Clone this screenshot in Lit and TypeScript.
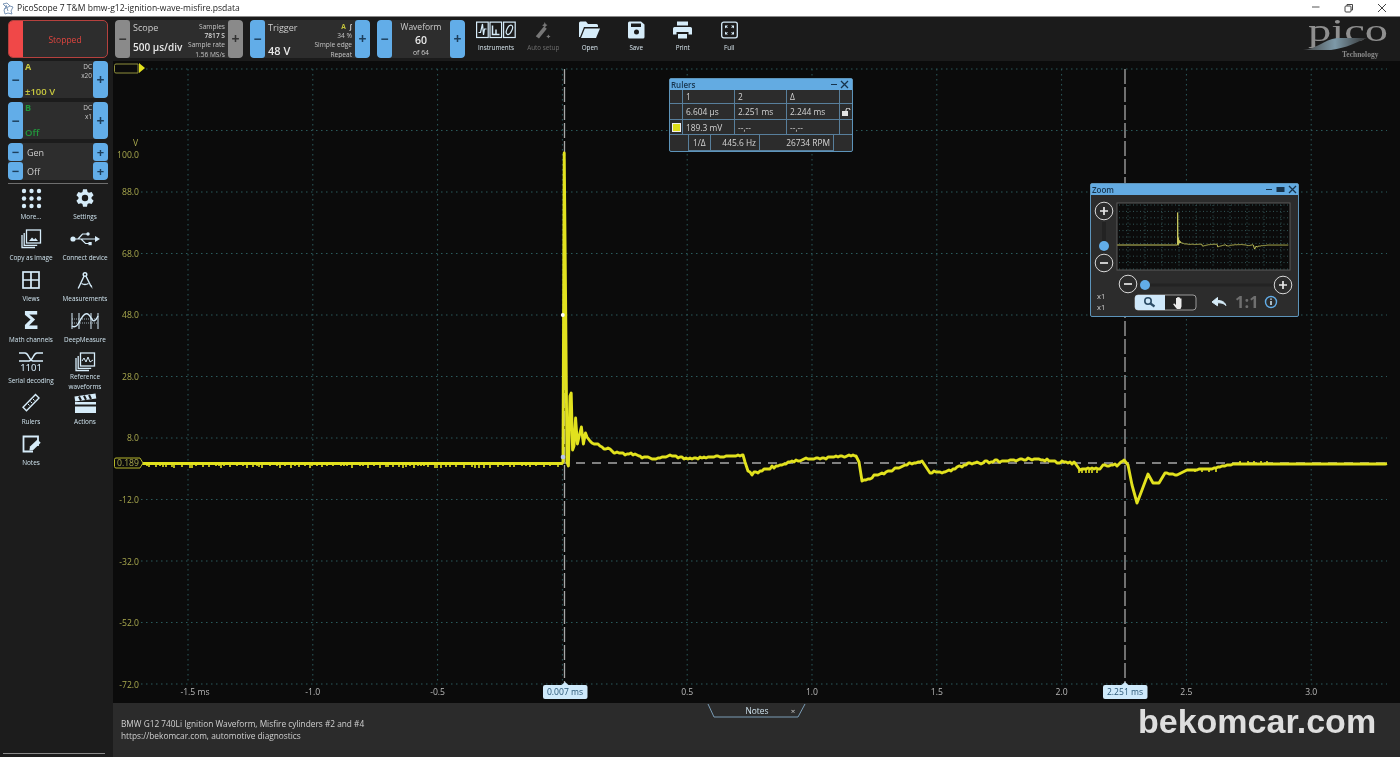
import { LitElement, html, css, svg } from "lit";
import { customElement } from "lit/decorators.js";

const Y = "#e2e21e";
const TICK = "#b9b9b9";
const OLIVE = "#a9a94e";

function rng(seed: number) {
  let s = seed;
  return () => {
    s = (s * 16807) % 2147483647;
    return s / 2147483647;
  };
}

function buildTrace(): { d: string; ticks: string } {
  const r = rng(4711);
  const pts: [number, number][] = [];
  pts.push([115, 463.5], [562, 463.5]);
  const raw: [number, number][] = [
    [563, 462], [564.2, 153], [565.6, 300], [567, 462], [568.4, 466], [570, 396], [571.2, 393], [572.6, 450], [574, 446],
    [575.6, 418], [577.4, 444], [579.2, 436], [581.4, 427], [583.4, 444], [585.5, 433], [587, 437],
  ];
  pts.push(...raw);
  const anchors: [number, number][] = [
    [590, 441], [600, 446], [610, 450], [615, 453], [635, 454], [640, 457], [660, 458], [666, 456], [672, 455], [678, 458],
    [700, 458], [730, 456], [743, 455], [745, 462], [748, 472], [752, 474], [760, 471], [770, 468], [780, 465], [790, 463],
    [800, 460], [820, 458], [845, 456], [856, 456], [859, 462], [862, 481], [870, 478], [880, 474], [895, 469], [910, 464], [922, 461],
    [930, 472], [945, 472], [960, 466], [975, 463], [1000, 461], [1035, 459], [1060, 462], [1075, 463], [1080, 469], [1100, 469], [1103, 465],
    [1117, 465], [1124, 460], [1128, 465], [1132, 485], [1137, 503], [1142, 490], [1148, 474], [1153, 483], [1159, 483], [1165, 473], [1177, 475],
    [1187, 470], [1210, 469], [1223, 466], [1235, 464], [1387, 463.5],
  ];
  for (let i = 0; i < anchors.length - 1; i++) {
    const [x0, y0] = anchors[i];
    const [x1, y1] = anchors[i + 1];
    const steep = Math.abs(y1 - y0) / (x1 - x0) > 1;
    if (steep) {
      pts.push([x0, y0]);
      continue;
    }
    for (let x = x0; x < x1; x += 2) {
      const t = (x - x0) / (x1 - x0);
      const jitter = x < 1120 ? (r() > 0.6 ? (r() > 0.5 ? 1 : -1) : 0) : 0;
      pts.push([x, Math.round(y0 + (y1 - y0) * t + jitter)]);
    }
  }
  pts.push([1387, 463.5]);
  const d = "M" + pts.map((p) => `${p[0]} ${p[1]}`).join("L");
  let ticks = "";
  for (let x = 118; x < 560; x += 2 + Math.floor(r() * 7)) {
    ticks += `M${x} 464V${466 + Math.floor(r() * 3)}`;
  }
  for (let x = 1079; x < 1100; x += 3 + Math.floor(r() * 4)) ticks += `M${x} 470V473`;
  for (let x = 1195; x < 1222; x += 4 + Math.floor(r() * 4)) ticks += `M${x} 469V472`;
  for (let x = 1240; x < 1270; x += 5 + Math.floor(r() * 4)) ticks += `M${x} 461V464`;
  return { d, ticks };
}
const TRACE = buildTrace();

const XS = [188, 312.8, 437.6, 562.4, 687.2, 812, 936.8, 1061.6, 1186.4, 1311.2];
const XL = ["-1.5 ms", "-1.0", "-0.5", "", "0.5", "1.0", "1.5", "2.0", "2.5", "3.0"];
const HY = [69, 130.5, 192, 253.5, 315, 376.5, 438, 499.5, 561, 622.5, 684];
const YL: [string, number][] = [
  ["100.0", 155], ["88.0", 192], ["68.0", 254], ["48.0", 315], ["28.0", 377], ["8.0", 438],
  ["-12.0", 500], ["-32.0", 562], ["-52.0", 623], ["-72.0", 685],
];

function gear(cx: number, cy: number, ro: number, ri: number, n: number) {
  let d = "";
  for (let i = 0; i < n; i++) {
    const a = (i / n) * Math.PI * 2 - Math.PI / 2;
    const w = Math.PI / n;
    const p = (rad: number, ang: number) => `${(cx + rad * Math.cos(ang)).toFixed(2)} ${(cy + rad * Math.sin(ang)).toFixed(2)}`;
    d += `${i ? "L" : "M"}${p(ri, a - w * 0.75)}L${p(ro, a - w * 0.42)}L${p(ro, a + w * 0.42)}L${p(ri, a + w * 0.75)}`;
  }
  return d + "Z";
}

const ICON = {
  more: svg`<g fill="currentColor">${[0, 1, 2].map((r) => [0, 1, 2].map((c) => svg`<circle cx=${3 + c * 7.5} cy=${3 + r * 7.5} r="2.2"></circle>`))}</g>`,
  settings: svg`<path fill="currentColor" fill-rule="evenodd" d="${gear(10, 10, 9, 6.6, 6)} M10 6.8a3.2 3.2 0 1 0 0 6.4a3.2 3.2 0 0 0 0-6.4Z"></path>`,
  copy: svg`<g fill="none" stroke="currentColor" stroke-width="1.3"><rect x="5.5" y="1" width="14" height="13"></rect><path d="M3.2 4v12.3h13M1 6v12.5h13"></path></g><path fill="currentColor" d="M8 12l3-3.5 2 2 1.5-1.5L17 12z"></path>`,
  usb: svg`<g fill="currentColor" stroke="currentColor"><circle cx="3" cy="9" r="2.6" stroke="none"></circle><path fill="none" stroke-width="1.2" d="M3 9H26M8 9l4.5-5H17M11 9l4.5 4.5H19"></path><path stroke="none" d="M25 6l5 3-5 3z"></path><circle cx="18" cy="4" r="1.7" stroke="none"></circle><rect x="18.5" y="12" width="3.2" height="3.2" stroke="none"></rect></g>`,
  views: svg`<g fill="none" stroke="currentColor" stroke-width="1.7"><rect x="2" y="2" width="16" height="16"></rect><path d="M10 2v16M2 10h16"></path></g>`,
  meas: svg`<g fill="none" stroke="currentColor" stroke-width="1.4"><circle cx="10" cy="4.5" r="1.8"></circle><path d="M9 6.2L3.2 18.5M11 6.2l5 10"></path><path d="M6.5 13.5c2.2 1.3 4.7 1.3 7 0"></path></g><path fill="currentColor" d="M15.5 16l2 3-.6-3.8z"></path>`,
  deep: svg`<g fill="none" stroke="currentColor"><path stroke-width="1.2" d="M1 2v16M8 2v16M20 2v16M27 2v16" opacity=".85"></path><path stroke-width=".7" d="M1 8H27M1 12H27" stroke-dasharray="1 1"></path><path stroke-width="1.4" d="M1 15C5 18 8 12 10 8S15 1 18 4S22 15 27 5"></path></g>`,
  serial: svg`<g fill="none" stroke="currentColor" stroke-width="1.5"><path d="M1 2H7C11 2 11 10 15 10H25M25 2H19C15 2 15 10 11 10H1"></path></g><text x="13" y="20" text-anchor="middle" fill="currentColor" font-size="9.500" font-family="Noto Sans, sans-serif">1101</text>`,
  ref: svg`<g fill="none" stroke="currentColor" stroke-width="1.3"><rect x="5.5" y="1" width="14" height="13"></rect><path d="M3.2 4v12.3h13M1 6v12.5h13"></path><path d="M7 9l2-3 2 4 2-5 2 5 3-2" stroke-width="1"></path></g>`,
  rulers: svg`<g fill="none" stroke="currentColor" stroke-width="1.4"><path d="M14.5 1.5L18 5 5.5 17.8 2 14.2z"></path><path stroke-width="1" d="M12 6l1.5 1.5M9.5 8.6L11 10M7 11l1.5 1.5"></path></g>`,
  actions: svg`<g fill="currentColor"><path d="M1 9h21v11H1z"></path><path d="M0.5 3.6L21.5 0.6 22.3 5.5 1.2 8.4z"></path></g><path stroke="#1c1c1c" stroke-width="2" d="M5 3.5l2 4M10 2.8l2 4M15 2l2 4M1 12.5H22"></path>`,
  notes: svg`<g fill="none" stroke="currentColor" stroke-width="1.8"><path d="M12 17.5H2.5V2.5H17V12"></path></g><path fill="currentColor" d="M9 12.6l7.5-7 3.2 3.2-7.5 7.2-3.8.6z"></path>`,
};

type Item = { key: keyof typeof ICON | "sigma"; w: number; h: number; label: string[]; };
const ITEMS: Item[] = [
  { key: "more", w: 21, h: 21, label: ["More..."] },
  { key: "settings", w: 20, h: 20, label: ["Settings"] },
  { key: "copy", w: 21, h: 20, label: ["Copy as image"] },
  { key: "usb", w: 30, h: 18, label: ["Connect device"] },
  { key: "views", w: 20, h: 20, label: ["Views"] },
  { key: "meas", w: 20, h: 20, label: ["Measurements"] },
  { key: "sigma", w: 20, h: 20, label: ["Math channels"] },
  { key: "deep", w: 28, h: 20, label: ["DeepMeasure"] },
  { key: "serial", w: 26, h: 22, label: ["Serial decoding"] },
  { key: "ref", w: 21, h: 20, label: ["Reference", "waveforms"] },
  { key: "rulers", w: 20, h: 20, label: ["Rulers"] },
  { key: "actions", w: 23, h: 21, label: ["Actions"] },
  { key: "notes", w: 20, h: 20, label: ["Notes"] },
];

const TOOLS = [
  {
    label: "Instruments", w: 40, h: 17, cls: "tool first",
    icon: svg`<g fill="none" stroke="currentColor" stroke-width="1.2"><rect x=".6" y=".6" width="11.6" height="15.4"></rect><rect x="14" y=".6" width="11.6" height="15.4"></rect><rect x="27.6" y=".6" width="11.6" height="15.4"></rect><path d="M2.5 11h2l2-8.5 1 11 1-6h2"></path><path stroke-width="1.5" d="M16.5 4v9h7M20 13V8"></path><ellipse cx="33.4" cy="8.3" rx="2.5" ry="5" transform="rotate(25 33.4 8.3)"></ellipse></g>`,
  },
  {
    label: "Auto setup", w: 18, h: 20, cls: "tool dim",
    icon: svg`<g fill="#777"><path d="M1 17l9-11 3.2 2.6L4.5 19.5z"></path><path d="M11 1l1 2.5 2 1-2 1.2-1 2.3-1-2.3-2-1 2-1.2zM15 15l.8 1.5 1.6.7-1.6.8-.8 1.5-.8-1.5-1.6-.8 1.6-.7z"></path></g>`,
  },
  {
    label: "Open", w: 21, h: 18, cls: "tool",
    icon: svg`<path fill="currentColor" d="M0 2a1.5 1.5 0 0 1 1.5-1.5H7l2 2.5h8.5A1.5 1.5 0 0 1 19 4.500V6H5L1 16H0z"></path><path fill="currentColor" d="M5.800 7.500H21L17 17H2z"></path>`,
  },
  {
    label: "Save", w: 17, h: 17, cls: "tool",
    icon: svg`<path fill="currentColor" fill-rule="evenodd" d="M1.500 0H13l3.500 3v12.500a1.500 1.500 0 0 1-1.500 1.500H1.500A1.500 1.500 0 0 1 0 15.500V1.500A1.500 1.500 0 0 1 1.500 0zM3 2v3.500h10V2zM8.500 8a2.500 2.500 0 1 0 0 5a2.500 2.500 0 0 0 0-5z"></path>`,
  },
  {
    label: "Print", w: 19, h: 17, cls: "tool",
    icon: svg`<path fill="currentColor" d="M4 0h11v4H4zM1.500 5.500h16A1.500 1.500 0 0 1 19 7v6h-3.500v-2.500h-12V13H0V7a1.500 1.500 0 0 1 1.500-1.500z"></path><path fill="currentColor" d="M5 12.500h9V17H5z"></path>`,
  },
  {
    label: "Full", w: 17, h: 17, cls: "tool",
    icon: svg`<rect x=".7" y=".7" width="15.600" height="15.600" rx="2" fill="none" stroke="currentColor" stroke-width="1.300"></rect><path fill="currentColor" d="M4 4h3L4 7zM13 4v3l-3-3zM4 13v-3l3 3zM13 13h-3l3-3z"></path><path stroke="currentColor" d="M4.500 4.500l2 2M12.500 4.500l-2 2M4.500 12.500l2-2M12.500 12.500l-2-2"></path>`,
  },
];

@customElement("app-root")
export class AppRoot extends LitElement {
  static styles = css`
    :host {
      display: flex;
      flex-direction: column;
      width: 1400px;
      height: 757px;
      overflow: hidden;
      background: #1b1b1b;
      font-family: "Open Sans", "Noto Sans", sans-serif;
      color: #ddd;
      filter: blur(0.3px);
    }
    .title {
      height: 17px;
      box-sizing: border-box;
      flex: none;
      background: #fff;
      border-bottom: 1px solid #8a8a8a;
      display: flex;
      align-items: center;
      color: #222;
      font-size: 8.550px;
      padding-left: 2px;
      gap: 3px;
    }
    .title .name { flex: 1; }
    .win { display: flex; color: #444; margin-right: 2px; }
    .win span { width: 33px; display: flex; justify-content: center; }
    .toolbar {
      height: 44px;
      box-sizing: border-box;
      flex: none;
      background: #1b1b1b;
      display: flex;
      align-items: flex-start;
      padding: 3px 0 0 8px;
      position: relative;
    }
    .ctl {
      height: 38px;
      background: #2d2d2d;
      border-radius: 4px;
      display: flex;
      overflow: hidden;
      flex: none;
    }
    .stopped {
      width: 100px;
      box-sizing: border-box;
      border: 1px solid #b5413e;
      border-radius: 5px;
      margin-right: 7px;
    }
    .stopped i { width: 14px; background: #f04848; }
    .stopped b {
      flex: 1;
      text-align: center;
      align-self: center;
      font-weight: 400;
      font-size: 8.500px;
      color: #e0453f;
    }
    .btn {
      width: 15px;
      flex: none;
      background: #62ade8;
      border-radius: 3px;
      display: flex;
      align-items: center;
      justify-content: center;
      color: #1d3f5c;
      font-size: 14px;
      line-height: 1;
      font-weight: 700;
    }
    .btn.grey { background: #8a8a8a; color: #333; }
    .scope { width: 128px; margin-right: 7px; }
    .trigger { width: 120px; margin-right: 7px; }
    .wave { width: 88px; margin-right: 11px; }
    .ctlL {
      flex: 1;
      padding: 1px 0 0 3px;
      display: flex;
      flex-direction: column;
      justify-content: space-between;
      font-size: 9px;
      color: #ccc;
      white-space: nowrap;
    }
    .ctlL strong { font-size: 10px; line-height: 17px; font-weight: 600; color: #e8e8e8; margin-bottom: 2px; }
    .trigger .ctlL strong { font-size: 11px; margin-bottom: -1px; }
    .ctlR {
      text-align: right;
      font-size: 6.600px;
      line-height: 9.200px;
      padding: 2px 3px 0 0;
      color: #c4c4c4;
      white-space: nowrap;
    }
    .ctlR b { font-weight: 600; color: #ddd; }
    .ctlR .a { color: #c4c43c; font-weight: 700; }
    .ctlC {
      flex: 1;
      display: flex;
      flex-direction: column;
      align-items: center;
      font-size: 8.500px;
      line-height: 12px;
      padding-top: 1px;
      color: #ccc;
    }
    .ctlC strong { font-size: 10.500px; font-weight: 600; line-height: 14px; color: #e8e8e8; }
    .ctlC small { font-size: 6.800px; line-height: 11px; }
    .tool {
      width: 46.500px;
      flex: none;
      height: 38px;
      display: flex;
      flex-direction: column;
      align-items: center;
      color: #d6ecf9;
      font-size: 6.300px;
    }
    .tool svg { height: 18px; margin-top: 1px; flex: none; }
    .tool span { margin-top: 4px; color: #d8e6ee; white-space: nowrap; }
    .tool.first { width: 40px; margin-right: 4px; }
    .tool.dim span { color: #6d6d6d; }
    .logo { position: absolute; right: 5px; top: 0; overflow: visible; }
    .lower { flex: 1; display: flex; min-height: 0; }
    .side {
      width: 113px;
      flex: none;
      background: #1c1c1c;
      box-sizing: border-box;
      padding: 0 5px 0 8px;
      display: flex;
      flex-direction: column;
      position: relative;
    }
    .chan { width: 100px; height: 37px; margin-bottom: 4px; }
    .chanBody { flex: 1; display: flex; justify-content: space-between; padding: 0 1px 0 2px; min-width: 0; }
    .chanL { display: flex; flex-direction: column; justify-content: space-between; font-size: 9px; font-weight: 700; line-height: 12px; }
    .chanL strong { font-size: 9.500px; font-weight: 600; line-height: 13px; }
    .chanR { font-size: 6.500px; line-height: 8.500px; text-align: right; padding-top: 2px; color: #c8c8c8; }
    .yellow { color: #c9c93f; }
    .green { color: #22963c; }
    .gen { width: 100px; height: 37px; display: flex; flex-direction: column; gap: 1px; background: #2d2d2d; border-radius: 4px; overflow: hidden; }
    .gen > div { flex: 1; display: flex; font-size: 9px; align-items: center; color: #ccc; }
    .gen .btn { align-self: stretch; font-size: 13px; }
    .gen span { flex: 1; padding-left: 4px; }
    .sep { height: 1px; background: #6e6e6e; margin: 3px 0 0; }
    .grid {
      display: grid;
      grid-template-columns: 54px 54px;
      grid-auto-rows: 41px;
      margin: 3px 0 0 -4px;
    }
    .item { display: flex; flex-direction: column; align-items: center; color: #d6ecf9; font-size: 6.400px; min-width: 0; }
    .item .ic { height: 22px; flex: none; display: flex; align-items: center; justify-content: center; }
    .item p { margin: 3px 0 0; text-align: center; white-space: nowrap; line-height: 10px; color: #cfe3ee; }
    .item.two p { margin-top: -1px; line-height: 9.500px; }
    .sigma { font: 700 24px "DejaVu Sans", sans-serif; color: #d6ecf9; line-height: 22px; }
    .endline { position: absolute; left: 3px; right: 8px; bottom: 3px; height: 1px; background: #8a8a8a; }
    .right { flex: 1; display: flex; flex-direction: column; min-width: 0; }
    .plot { height: 642px; flex: none; position: relative; background: #0b0b0b; }
    .plot > svg { display: block; }
    .panel {
      flex: 1;
      background: #2b2b2b;
      position: relative;
      padding: 15px 0 0 8px;
      font-size: 8.300px;
      line-height: 12px;
      color: #d0d0d0;
    }
    .tab { position: absolute; left: 594px; top: 0; }
    .mark {
      position: absolute;
      left: 1025px;
      top: 0;
      font: 700 34px "Liberation Sans", Arial, sans-serif;
      color: #dedede;
      white-space: nowrap;
      line-height: 36px;
    }
    .window {
      position: absolute;
      background: #2c2c2c;
      border: 1px solid #5d94ba;
      border-radius: 2px;
      box-sizing: border-box;
    }
    .wh {
      height: 11px;
      background: #63abe2;
      display: flex;
      align-items: center;
      padding: 0 1px;
      font-size: 8px;
      font-weight: 600;
      color: #17344d;
    }
    .wh span { flex: 1; }
    .rulers { left: 556px; top: 17px; width: 184px; height: 74px; }
    .rt {
      display: grid;
      grid-template-columns: 13px 52px 52px 53px 1fr;
      grid-template-rows: 14px 16px 15px;
      font-size: 8.400px;
      color: #d4d4d4;
    }
    .rt > div {
      border-right: 1px solid #587f9c;
      border-bottom: 1px solid #587f9c;
      padding-left: 3px;
      display: flex;
      align-items: center;
      white-space: nowrap;
      min-width: 0;
    }
    .rt > div.e { padding: 0; justify-content: center; }
    .rt > div:nth-child(5n) { border-right: 0; }
    .swatch { width: 7px; height: 7px; background: #dcdc18; border: 1px solid #eee; }
    .rb {
      display: flex;
      height: 17px;
      padding: 0 13px 0 18px;
      font-size: 8.400px;
      color: #d4d4d4;
      box-sizing: border-box;
    }
    .rb div { border-left: 1px solid #587f9c; display: flex; align-items: center; justify-content: flex-end; padding-right: 3px; height: 16px; box-sizing: border-box; border-bottom: 1px solid #587f9c;}
    .rb div:last-child { border-right: 1px solid #587f9c; }
    .zoomw { left: 977px; top: 122px; width: 209px; height: 134px; }
    .zoomw svg { display: block; }
  `;

  private trace(w: number, ticks = true, color = Y) {
    return svg`<path d=${TRACE.d} fill="none" stroke=${color} stroke-width=${w} stroke-linejoin="round" vector-effect="non-scaling-stroke"></path>
    ${ticks ? svg`<path d=${TRACE.ticks} fill="none" stroke=${color} stroke-width="1.6"></path>` : ""}`;
  }

  private rulerTag(x: number, label: string) {
    return svg`<g>
      <path d="M${x} 682l3.500 3h-7z" fill="#cfeafb"></path>
      <rect x=${x - 22} y="685" width="44.500" height="14" rx="2" fill="#cfeafb"></rect>
      <text x=${x} y="695" text-anchor="middle" font-size="8.600" fill="#2b5877">${label}</text>
    </g>`;
  }

  private plot() {
    return html`<svg width="1287" height="642" viewBox="113 61 1287 642" font-family="Open Sans, Noto Sans, sans-serif">
      <g fill="none" stroke="#2b5a5c" stroke-width="1" stroke-dasharray="1.500 3.500">
        ${XS.map((x) => svg`<path d="M${x} 69V684"></path>`)}
        ${HY.map((y, i) => svg`<path d="M${i === 0 ? 146 : 141} ${y}H1387"></path>`)}
      </g>
      <g font-size="8.600" fill=${OLIVE} text-anchor="end">
        <text x="138" y="146">V</text>
        ${YL.map(([t, y]) => svg`<text x="139" y=${y + 3}>${t}</text>`)}
      </g>
      <g font-size="8.600" fill=${TICK} text-anchor="middle">
        ${XS.map((x, i) => svg`<text x=${i === 0 ? x + 7 : x} y="695">${XL[i]}</text>`)}
      </g>
      <path d="M144 463H1387" stroke="#a8a8a8" stroke-width="1.300" stroke-dasharray="9 7"></path>
      <path d="M564.500 69V684M1125 69V684" stroke="#a8a8a8" stroke-width="1.300" stroke-dasharray="15 3"></path>
      ${this.trace(2.9)}
      <circle cx="562.800" cy="315" r="2" fill="#fff"></circle>
      <circle cx="563" cy="457" r="2.300" fill="#b9c6f0"></circle>
      <path d="M116 64h22v9h-22a1.500 1.500 0 0 1-1.500-1.500v-6a1.500 1.500 0 0 1 1.500-1.500z" fill="#0b0b0b" stroke="#8f8f3c" stroke-width="1"></path>
      <path d="M139 63l6 5-6 5z" fill=${Y}></path>
      <path d="M116 458h24l3 5-3 5h-24a1.500 1.500 0 0 1-1.500-1.500v-7a1.500 1.500 0 0 1 1.500-1.500z" fill="#0b0b0b" stroke="#b5b52a"></path>
      <text x="128" y="466" text-anchor="middle" font-size="8.600" fill=${OLIVE}>0.189</text>
      ${this.rulerTag(565, "0.007 ms")}
      ${this.rulerTag(1125, "2.251 ms")}
    </svg>`;
  }

  private rulers() {
    const cells = ["", "1", "2", "Δ", "", "", "6.604 µs", "2.251 ms", "2.244 ms", "L", "S", "189.3 mV", "--,--", "--,--", ""];
    return html`<div class="window rulers">
      <div class="wh"><span>Rulers</span>
        <svg width="20" height="9" viewBox="0 0 20 9" stroke="#17344d" fill="none"><path d="M0 4.500H6"></path><path stroke-width="1.300" d="M10 1l7 7M17 1l-7 7"></path></svg>
      </div>
      <div class="rt">
        ${cells.map((c) => c === "S"
          ? html`<div class="e"><i class="swatch"></i></div>`
          : c === "L"
            ? html`<div class="e"><svg width="9" height="8" viewBox="0 0 9 8"><rect y="3" width="6" height="5" fill="#e4e4e4"></rect><path d="M4 3V2a2 2 0 0 1 4 0" fill="none" stroke="#e4e4e4"></path></svg></div>`
            : html`<div>${c}</div>`)}
      </div>
      <div class="rb">
        <div style="width:22px;justify-content:flex-start;padding-left:4px">1/Δ</div>
        <div style="width:49px">445.6 Hz</div>
        <div style="width:75px">26734 RPM</div>
      </div>
    </div>`;
  }

  private circleBtn(x: number, y: number, plus: boolean) {
    return svg`<circle cx=${x} cy=${y} r="8.800" fill="#2c2c2c" stroke="#d8d8d8" stroke-width="1"></circle>
      <path d=${plus ? `M${x - 4} ${y}h8M${x} ${y - 4}v8` : `M${x - 4} ${y}h8`} stroke="#e8e8e8" stroke-width="1.700"></path>`;
  }

  private zoomWin() {
    const gx = [0, 1, 2, 3, 4, 5, 6, 7, 8, 9].map((i) => 1117 + 11 + i * 17);
    const gy = [0, 1, 2, 3, 4, 5, 6, 7, 8, 9, 10].map((i) => 205 + i * 6.400);
    return html`<div class="window zoomw">
      <div class="wh"><span>Zoom</span>
        <svg width="31" height="9" viewBox="0 0 31 9" stroke="#17344d" fill="none"><path d="M0 4.500H6"></path><rect x="11" y="2.500" width="7" height="4" fill="#17344d"></rect><path stroke-width="1.300" d="M23 1l7 7M30 1l-7 7"></path></svg>
      </div>
      <svg width="207" height="121" viewBox="1091 195 207 121" font-family="Open Sans, Noto Sans, sans-serif">
        <rect x="1117" y="203" width="173" height="67" fill="#0b0b0b" stroke="#5a5a5a"></rect>
        <g stroke="#3d6a6c" stroke-width=".8" stroke-dasharray="1 2.500" fill="none">
          ${gx.map((x) => svg`<path d="M${x} 205V268"></path>`)}
          ${gy.map((y) => svg`<path d="M1119 ${y}H1288"></path>`)}
        </g>
        <svg x="1117" y="203" width="173" height="67" viewBox="113 61 1287 642" preserveAspectRatio="none">${this.trace(1, false, "#c9c95e")}</svg>
        ${this.circleBtn(1104, 211, true)}
        <rect x="1102" y="222" width="4" height="30" fill="#232323"></rect>
        <circle cx="1104" cy="246" r="5" fill="#62ade8"></circle>
        ${this.circleBtn(1104, 263, false)}
        ${this.circleBtn(1128, 284, false)}
        <rect x="1140" y="283.500" width="135" height="3" fill="#232323"></rect>
        <circle cx="1145" cy="285" r="5" fill="#62ade8"></circle>
        ${this.circleBtn(1283, 285, true)}
        <g font-size="7.500" fill="#cfcfcf"><text x="1097" y="299">x1</text><text x="1097" y="310">x1</text></g>
        <rect x="1135" y="295" width="61" height="15" rx="3" fill="#232323" stroke="#9a9a9a"></rect>
        <path d="M1138 295h27v15h-27a3 3 0 0 1-3-3v-9a3 3 0 0 1 3-3z" fill="#cfe8fa"></path>
        <circle cx="1148" cy="301" r="3.200" fill="none" stroke="#2c4c66" stroke-width="1.600"></circle>
        <path d="M1150.500 303.500l4 3" stroke="#2c4c66" stroke-width="2.200"></path>
        <path d="M1177 309c-2-2-3-4-4-5l1.500-.5 1.500 1.500v-7h1.300v5-6h1.400v6-5.500h1.400v5.500-4.500h1.400v8l-1 2.500z" fill="#ececec"></path>
        <path d="M1212 302l5.500-4.500v3c4 0 7 1 8.500 5-2.500-2.500-5-2.700-8.500-2.700v3z" fill="#d6ecf9" stroke="#d6ecf9"></path>
        <text x="1235" y="308" font-size="16.500" font-weight="700" fill="#6f6f6f">1:1</text>
        <circle cx="1271" cy="302" r="5.500" fill="none" stroke="#62ade8" stroke-width="1.400"></circle>
        <path d="M1271 301v4M1271 298.500v1.300" stroke="#d6ecf9" stroke-width="1.500"></path>
      </svg>
    </div>`;
  }

  render() {
    return html`
      <div class="title">
        <svg width="12" height="13" viewBox="0 0 12 13" fill="none" stroke="#7d97b8" stroke-width="1"><path d="M1 2l4-1 3 3 3 1-2 4 1 3-4-1-3 1-1-4 2-3z"></path><path d="M4 3l2 6M2 7l6-3"></path></svg>
        <span class="name">PicoScope 7 T&amp;M bmw-g12-ignition-wave-misfire.psdata</span>
        <div class="win">
          <span><svg width="10" height="8" viewBox="0 0 10 8"><path d="M1 4H8.500" stroke="#555"></path></svg></span>
          <span><svg width="10" height="10" viewBox="0 0 10 10" fill="none" stroke="#444"><rect x="1" y="3" width="6" height="6" rx="1"></rect><path d="M3 3V1.500h5.500v5.500H7"></path></svg></span>
          <span><svg width="10" height="10" viewBox="0 0 10 10" stroke="#444"><path d="M1 1l8 8M9 1l-8 8"></path></svg></span>
        </div>
      </div>
      <div class="toolbar">
        <div class="ctl stopped"><i></i><b>Stopped</b></div>
        <div class="ctl scope">
          <div class="btn grey">−</div>
          <div class="ctlL"><span>Scope</span><strong>500 µs/div</strong></div>
          <div class="ctlR">Samples<br /><b>7817 S</b><br />Sample rate<br />1.56 MS/s</div>
          <div class="btn grey">+</div>
        </div>
        <div class="ctl trigger">
          <div class="btn">−</div>
          <div class="ctlL"><span>Trigger</span><strong>48 V</strong></div>
          <div class="ctlR"><span class="a">A</span> &nbsp;<span class="a" style="color:#ccc">∫</span><br />34 %<br />Simple edge<br />Repeat</div>
          <div class="btn">+</div>
        </div>
        <div class="ctl wave">
          <div class="btn">−</div>
          <div class="ctlC"><span>Waveform</span><strong>60</strong><small>of 64</small></div>
          <div class="btn">+</div>
        </div>
        ${TOOLS.map((t) => html`<div class=${t.cls}>
          <svg width=${t.w} height=${t.h} viewBox="0 0 ${t.w} ${t.h}">${t.icon}</svg>
          <span>${t.label}</span>
        </div>`)}
        <svg class="logo" width="95" height="44" viewBox="0 0 95 44">
          <defs><linearGradient id="sw" x1="0" x2="1"><stop offset="0" stop-color="#444"></stop><stop offset=".5" stop-color="#7d99a8"></stop><stop offset="1" stop-color="#333"></stop></linearGradient></defs>
          <text x="8" y="24" font-family="Liberation Serif, serif" font-size="32" textLength="80" lengthAdjust="spacingAndGlyphs" fill="#8f8f8f">pico</text>
          <path d="M3 33C17 32 23 23 37 21L67 21C57 25 47 31 31 33z" fill="url(#sw)"></path>
          <text x="42" y="40" font-family="Liberation Serif, serif" font-size="7.500" font-weight="700" fill="#8a8a8a">Technology</text>
        </svg>
      </div>
      <div class="lower">
        <div class="side">
          <div class="ctl chan">
            <div class="btn">−</div>
            <div class="chanBody">
              <div class="chanL yellow"><span>A</span><strong>±100 V</strong></div>
              <div class="chanR">DC<br />x20</div>
            </div>
            <div class="btn">+</div>
          </div>
          <div class="ctl chan">
            <div class="btn">−</div>
            <div class="chanBody">
              <div class="chanL green"><span>B</span><strong>Off</strong></div>
              <div class="chanR">DC<br />x1</div>
            </div>
            <div class="btn">+</div>
          </div>
          <div class="gen">
            <div><div class="btn">−</div><span>Gen</span><div class="btn">+</div></div>
            <div><div class="btn">−</div><span>Off</span><div class="btn">+</div></div>
          </div>
          <div class="sep"></div>
          <div class="grid">
            ${ITEMS.map((it) => html`<div class="item ${it.label.length > 1 ? "two" : ""}">
              <div class="ic">
                ${it.key === "sigma"
                  ? html`<span class="sigma">Σ</span>`
                  : html`<svg width=${it.w} height=${it.h} viewBox="0 0 ${it.w} ${it.h}" style="overflow:visible">${ICON[it.key as keyof typeof ICON]}</svg>`}
              </div>
              <p>${it.label.map((l, i) => html`${i ? html`<br />` : ""}${l}`)}</p>
            </div>`)}
          </div>
          <div class="endline"></div>
        </div>
        <div class="right">
          <div class="plot">
            ${this.plot()}
            ${this.rulers()}
            ${this.zoomWin()}
          </div>
          <div class="panel">
            BMW G12 740Li Ignition Waveform, Misfire cylinders #2 and #4<br />
            https://bekomcar.com, automotive diagnostics
            <svg class="tab" width="100" height="17" viewBox="0 0 100 17" font-family="Open Sans, Noto Sans, sans-serif">
              <path d="M1 1l6 13H91L98 1" fill="none" stroke="#7a9cb5"></path>
              <text x="50" y="11" text-anchor="middle" font-size="8.400" fill="#cfe3ee">Notes</text>
              <text x="86" y="11" text-anchor="middle" font-size="8" fill="#ccc">×</text>
            </svg>
            <div class="mark">bekomcar.com</div>
          </div>
        </div>
      </div>
    `;
  }
}
